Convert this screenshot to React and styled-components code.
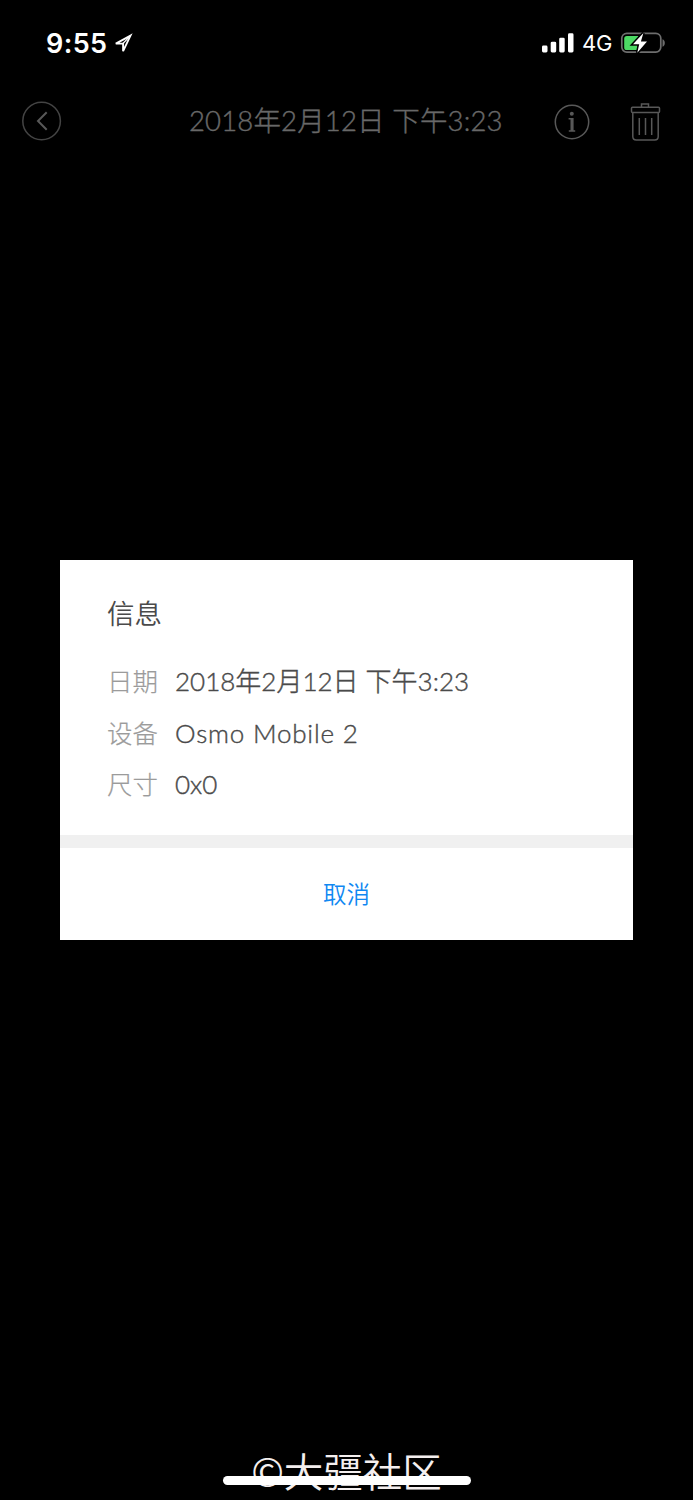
import React from 'react';
import styled, { createGlobalStyle } from 'styled-components';

const GlobalStyle = createGlobalStyle`
  * {
    box-sizing: border-box;
  }
  body {
    margin: 0;
    background-color: #000;
  }
`;

const Screen = styled.div`
  position: relative;
  display: flex;
  flex-direction: column;
  width: 693px;
  height: 1500px;
  overflow: hidden;
  background-color: #000;
  font-family: Lato, 'Noto Sans CJK SC', sans-serif;
`;

const StatusBar = styled.div`
  display: flex;
  align-items: center;
  height: 86px;
  padding: 0 27px 0 46px;
  color: #fff;
  font-family: Inter, sans-serif;
`;

const Time = styled.span`
  width: 67px;
  padding-top: 1px;
  font-size: 27px;
  font-weight: 600;
  letter-spacing: 0.4px;
  line-height: 32px;
`;

const StatusIcons = styled.div`
  display: flex;
  align-items: center;
  margin-left: auto;
`;

const Network = styled.span`
  width: 38px;
  margin-left: 8px;
  font-size: 22px;
  line-height: 28px;
  letter-spacing: -0.3px;
`;

const NavBar = styled.header`
  display: flex;
  align-items: center;
  height: 70px;
  padding: 0 32px 0 21px;
  color: #585858;
`;

const IconButton = styled.button`
  display: flex;
  flex: none;
  padding: 0;
  border: none;
  background: none;
  color: inherit;
`;

const NavTitle = styled.h1`
  width: 365px;
  margin: 0 0 0 126px;
  color: #686868;
  font-size: 27.5px;
  font-weight: 300;
  line-height: 40px;
  letter-spacing: 0.15px;
  white-space: nowrap;
  -webkit-text-stroke: 0.4px currentColor;
`;

const NavActions = styled.div`
  display: flex;
  align-items: center;
  gap: 40px;
  margin-left: auto;
  padding-top: 2px;
`;

const Overlay = styled.div`
  position: absolute;
  inset: 0;
  display: flex;
  align-items: center;
  justify-content: center;
`;

const Dialog = styled.section`
  width: 573px;
  height: 380px;
  background-color: #fff;
`;

const DialogBody = styled.div`
  height: 275px;
  padding: 34px 46px 0 47px;
`;

const DialogTitle = styled.h2`
  margin: 0 0 21px;
  color: #4a4a4a;
  font-size: 27.5px;
  font-weight: 350;
  line-height: 40px;
`;

const InfoRow = styled.div`
  display: flex;
  height: 51.5px;
  font-size: 26px;
  font-weight: 300;
  line-height: 52px;
  white-space: nowrap;
`;

const Label = styled.span`
  width: 68px;
  color: #9b9b9b;
  font-size: 25.5px;
  -webkit-text-stroke: 0.2px currentColor;
`;

const Value = styled.span`
  color: #4a4a4a;
  letter-spacing: ${({ $spacing }) => $spacing || 0};
  -webkit-text-stroke: 0.4px currentColor;
`;

const CancelButton = styled.button`
  width: 100%;
  height: 105px;
  padding: 0 0 3px;
  border: none;
  border-top: 13px solid #f0f0f0;
  background-color: #fff;
  color: #1088f2;
  font-family: inherit;
  font-size: 23.5px;
  font-weight: 350;
`;

const Footer = styled.footer`
  position: relative;
  display: flex;
  justify-content: center;
  height: 58px;
  margin-top: auto;
`;

const Watermark = styled.span`
  color: #f4efef;
  font-family: 'Noto Sans CJK SC', sans-serif;
  font-size: 39.5px;
  font-weight: 350;
  line-height: 56px;
  white-space: nowrap;
`;

const HomeIndicator = styled.div`
  position: absolute;
  bottom: 15px;
  left: 223px;
  width: 248px;
  height: 9px;
  border-radius: 5px;
  background-color: #fff;
`;

const LocationIcon = () => (
  <svg width="20" height="20" viewBox="0 0 20 20" fill="none">
    <path
      d="M17.5 2.6 2.8 10.6H10.1V18.2Z"
      stroke="#fff"
      strokeWidth="1.9"
      strokeLinejoin="miter"
    />
    <path d="M17.6 2.4 10 10.5" stroke="#fff" strokeWidth="1.3" />
  </svg>
);

const SignalIcon = () => (
  <svg width="32" height="20" viewBox="0 0 32 20" fill="#fff">
    <rect x="0" y="12.5" width="5.5" height="7" rx="1.4" />
    <rect x="8.7" y="8.7" width="5.5" height="10.8" rx="1.4" />
    <rect x="17.2" y="4.7" width="5.5" height="14.8" rx="1.4" />
    <rect x="26" y="0.3" width="5.5" height="19.2" rx="1.4" />
  </svg>
);

const BatteryIcon = () => (
  <svg width="46" height="24" viewBox="0 0 46 24">
    <rect x="1.8" y="2.3" width="39" height="18.8" rx="5" fill="none" stroke="#6d6d6d" strokeWidth="1.7" />
    <path d="M42.5 8.3C45.6 9.1 45.6 14.9 42.5 15.7Z" fill="#6d6d6d" />
    <path d="M6.8 5H18.5L17 19H6.8A2.6 2.6 0 0 1 4.2 16.4V7.6A2.6 2.6 0 0 1 6.8 5Z" fill="#4cd964" />
    <path
      d="M23.4 2 13 13.2H19.2L17.3 21.8 27 10.6H20.9Z"
      fill="#fff"
      stroke="#000"
      strokeWidth="3"
      paintOrder="stroke"
    />
  </svg>
);

const BackIcon = () => (
  <svg width="42" height="42" viewBox="0 0 42 42" fill="none" stroke="currentColor">
    <circle cx="20.6" cy="21" r="18.8" strokeWidth="1.5" stroke="#444" />
    <path d="M25.7 12.3 17 21 25.7 29.7" strokeWidth="2" />
  </svg>
);

const InfoIcon = () => (
  <svg width="36" height="36" viewBox="0 0 36 36">
    <circle cx="18" cy="18" r="16.7" fill="none" stroke="currentColor" strokeWidth="1.5" />
    <circle cx="17.8" cy="9.8" r="2" fill="currentColor" />
    <path d="M14.6 14H19.6V26.3H21.2V27.8H14.8V26.3H16.5V15.5H14.6Z" fill="currentColor" />
  </svg>
);

const TrashIcon = () => (
  <svg width="31" height="38" viewBox="0 0 31 38" fill="none" stroke="currentColor" strokeWidth="1.5">
    <path d="M11.5 4V1H18.5V4" />
    <rect x="1.5" y="4.2" width="28" height="5.3" rx="1" />
    <path d="M2.8 9.5V33.5Q2.8 37 6.3 37H24.7Q28.2 37 28.2 33.5V9.5M9.3 15V32M15.5 15V32M21.7 15V32" />
  </svg>
);

const info = [
  { label: '日期', value: '2018年2月12日 下午3:23' },
  { label: '设备', value: 'Osmo Mobile 2', spacing: '0.8px' },
  { label: '尺寸', value: '0x0' },
];

const App = () => {
  return (
    <Screen>
      <GlobalStyle />
      <StatusBar>
        <Time>9:55</Time>
        <LocationIcon />
        <StatusIcons>
          <SignalIcon />
          <Network>4G</Network>
          <BatteryIcon />
        </StatusIcons>
      </StatusBar>
      <NavBar>
        <IconButton aria-label="Back">
          <BackIcon />
        </IconButton>
        <NavTitle>2018年2月12日 下午3:23</NavTitle>
        <NavActions>
          <IconButton aria-label="Info">
            <InfoIcon />
          </IconButton>
          <IconButton aria-label="Delete">
            <TrashIcon />
          </IconButton>
        </NavActions>
      </NavBar>
      <Footer>
        <Watermark>©大疆社区</Watermark>
        <HomeIndicator />
      </Footer>
      <Overlay>
        <Dialog>
          <DialogBody>
            <DialogTitle>信息</DialogTitle>
            {info.map(({ label, value, spacing }) => (
              <InfoRow key={label}>
                <Label>{label}</Label>
                <Value $spacing={spacing}>{value}</Value>
              </InfoRow>
            ))}
          </DialogBody>
          <CancelButton>取消</CancelButton>
        </Dialog>
      </Overlay>
    </Screen>
  );
};

export default App;
